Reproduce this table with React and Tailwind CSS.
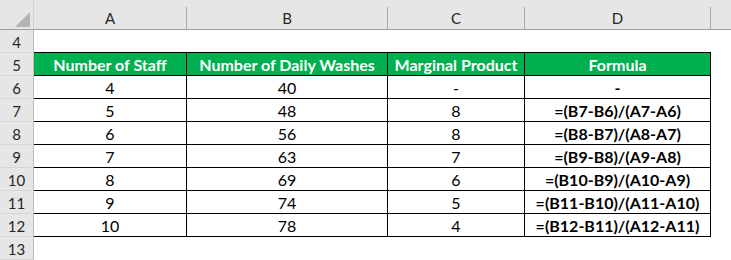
const COLS = [
  { label: 'A', w: 'w-[153px]' },
  { label: 'B', w: 'w-[201px]' },
  { label: 'C', w: 'w-[137px]' },
  { label: 'D', w: 'w-[186px]' },
]

const HEADERS = ['Number of Staff', 'Number of Daily Washes', 'Marginal Product', 'Formula']

const DATA = [
  [4, 40, '-', '-'],
  [5, 48, 8, '=(B7-B6)/(A7-A6)'],
  [6, 56, 8, '=(B8-B7)/(A8-A7)'],
  [7, 63, 7, '=(B9-B8)/(A9-A8)'],
  [8, 69, 6, '=(B10-B9)/(A10-A9)'],
  [9, 74, 5, '=(B11-B10)/(A11-A10)'],
  [10, 78, 4, '=(B12-B11)/(A12-A11)'],
]

function RowHead({ n }) {
  return (
    <div className="w-[34px] shrink-0 h-full flex items-center justify-center pt-[2px] bg-[#e6e6e6] border-r border-b border-r-[#bdbdbd] border-b-[#d6d6d6] text-[15px] text-[#262626]">
      {n}
    </div>
  )
}

export default function App() {
  return (
    <div className="w-[731px] h-[260px] overflow-hidden bg-white font-['Lato',sans-serif] text-black">
      {/* Column letters */}
      <div className="flex h-[30px] bg-[#e6e6e6] border-b border-[#9f9f9f]">
        <div className="w-[34px] shrink-0 flex items-end justify-end pr-[3px] pb-[2px] border-r border-[#d4d4d4]">
          <svg width="15" height="15" viewBox="0 0 15 15">
            <polygon points="0,15 15,15 15,0" fill="#b4b4b4" />
          </svg>
        </div>
        {COLS.map(c => (
          <div key={c.label} className={`${c.w} shrink-0 flex`}>
            <span className="flex-1 flex items-center justify-center pt-[7px] text-[15px] text-[#262626]">{c.label}</span>
            <span className="w-px h-[22px] self-end bg-[#ababab]" />
          </div>
        ))}
        <div className="flex-1" />
      </div>

      {/* Row 4 - empty, bottom line is top of table */}
      <div className="flex h-[23px]">
        <RowHead n={4} />
        {COLS.map(c => (
          <div key={c.label} className={`${c.w} shrink-0 border-b border-black`} />
        ))}
      </div>

      {/* Row 5 - green header */}
      <div className="flex h-[23px]">
        <RowHead n={5} />
        {COLS.map((c, i) => (
          <div key={c.label} className={`${c.w} shrink-0 flex items-center justify-center pt-[2px] bg-[#00b050] border-r border-b border-black text-white font-bold text-[16px]`}>
            {HEADERS[i]}
          </div>
        ))}
      </div>

      {/* Data rows */}
      {DATA.map((row, r) => (
        <div key={r} className="flex h-[23px]">
          <RowHead n={r + 6} />
          {COLS.map((c, i) => (
            <div key={c.label} className={`${c.w} shrink-0 flex items-center justify-center pt-[2px] border-r border-b border-black text-[16px] ${i === 3 ? 'font-bold' : ''}`}>
              {row[i]}
            </div>
          ))}
        </div>
      ))}

      {/* Row 13 */}
      <div className="flex h-[23px]">
        <RowHead n={13} />
      </div>
    </div>
  )
}
